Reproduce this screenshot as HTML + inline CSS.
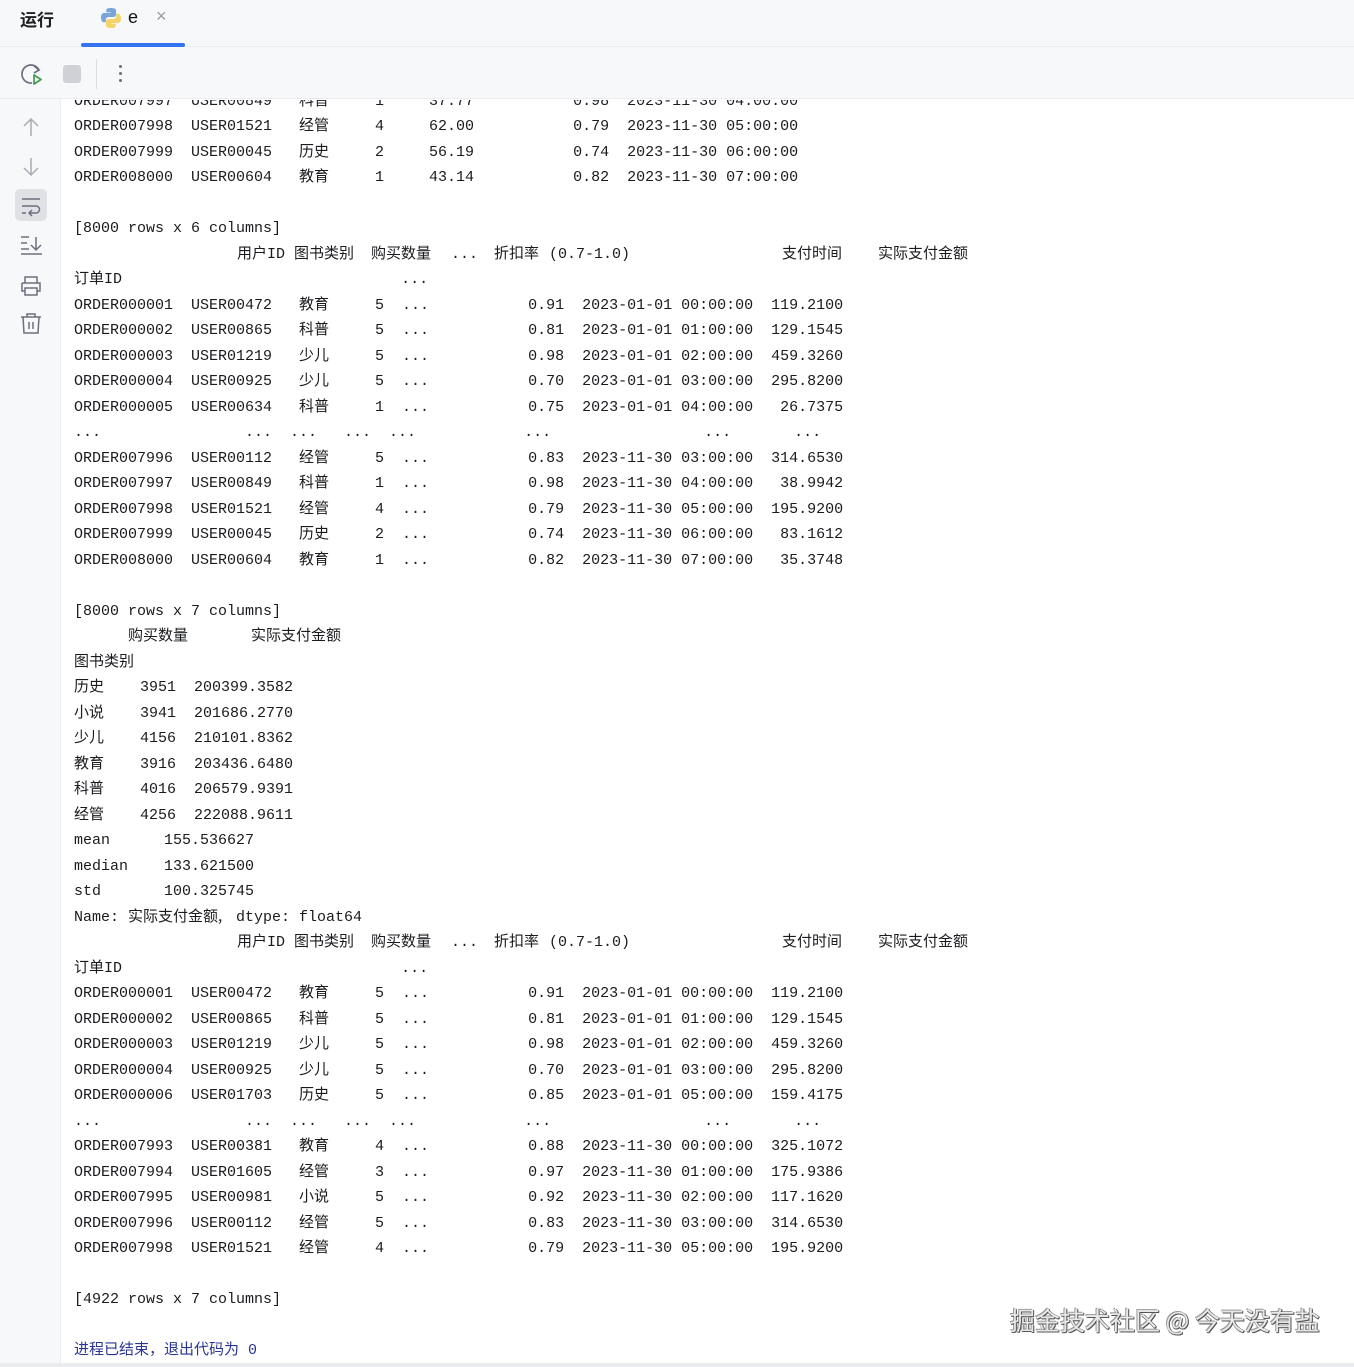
<!DOCTYPE html>
<html><head><meta charset="utf-8"><style>
*{margin:0;padding:0;box-sizing:border-box}
body{width:1354px;height:1367px;background:#fff;position:relative;overflow:hidden;font-family:"Liberation Sans","Noto Sans CJK SC",sans-serif;color:#1e1f22}
#hdr{position:absolute;left:0;top:0;width:1354px;height:47px;background:#f7f8fa;border-bottom:1px solid #ebecf0}
#tb{position:absolute;left:0;top:47px;width:1354px;height:52px;background:#f7f8fa;border-bottom:1px solid #ebecf0}
#side{position:absolute;left:0;top:99px;width:61px;height:1268px;background:#f7f8fa;border-right:1px solid #ebecf0}
#out{position:absolute;left:61px;top:100px;width:1293px;height:1263px;overflow:hidden}
#in{position:absolute;left:13px;top:-11.25px;font-family:"Liberation Mono","Noto Sans CJK SC",monospace;font-size:15px;line-height:25.5px;color:#1a1b1e;width:1200px}
.l{height:25.5px;position:relative;white-space:pre}
.k{display:inline-block;font-family:"Noto Sans CJK SC",sans-serif;font-size:15px;vertical-align:top;position:relative;top:-2px}
.w{width:76px}
.g{width:66px}
.a{position:absolute;top:0;font-family:"Liberation Mono","Noto Sans CJK SC",monospace}
.a.c{font-family:"Noto Sans CJK SC",sans-serif;font-size:15px;top:-2px}
#bot{position:absolute;left:0;top:1363px;width:1354px;height:4px;background:#ebecf0}
#wm{position:absolute;left:1010px;top:1302px;font-family:"Noto Sans CJK SC",sans-serif;font-size:25px;color:#e8e8e8;text-shadow:1px 1px 0 #555,-1px -1px 0 #999,1px 0 0 #666,0 1px 0 #666}
</style></head><body>
<div id="hdr">
<div style="position:absolute;left:20px;top:6px;font-size:17px;font-weight:bold;font-family:'Noto Sans CJK SC',sans-serif">运行</div>
<svg style="position:absolute;left:100px;top:7px" width="22" height="22" viewBox="0 0 22 22"><path d="M10.5 1C6 1 6.3 3 6.3 3v2.2h4.4v.7H4.4S1 5.6 1 10.5s3 4.8 3 4.8h1.8v-2.3s-.1-3 3-3h4.4s2.9 0 2.9-2.8V3.2S16.4 1 10.5 1z" fill="#7aa5d8"/><path d="M11.5 21c4.5 0 4.2-2 4.2-2v-2.2h-4.4v-.7h6.3S21 16.4 21 11.5s-3-4.8-3-4.8h-1.8V9s.1 3-3 3H8.8s-2.9 0-2.9 2.8v4S5.6 21 11.5 21z" fill="#f2d46b"/></svg>
<div style="position:absolute;left:128px;top:7px;font-size:18px;color:#111">e</div>
<div style="position:absolute;left:156px;top:6px;font-size:18px;color:#9a9ca1">×</div>
<div style="position:absolute;left:81px;top:43px;width:104px;height:4px;background:#3574f0;border-radius:2px"></div>
</div>
<div id="tb">
<svg style="position:absolute;left:20px;top:15px" width="26" height="26" viewBox="0 0 26 26"><path d="M19 8A9 9 0 1 0 12 21" fill="none" stroke="#6c707e" stroke-width="1.7"/><path d="M14 4l5 4-5 3" fill="none" stroke="#6c707e" stroke-width="1.7"/><path d="M14 13l7 4.5-7 4.5z" fill="none" stroke="#3f9b4b" stroke-width="1.7" stroke-linejoin="round"/></svg>
<div style="position:absolute;left:63px;top:18px;width:18px;height:18px;background:#cfd1d6;border-radius:3px"></div>
<div style="position:absolute;left:96px;top:12px;width:1px;height:30px;background:#dcdde1"></div>
<div style="position:absolute;left:119px;top:18px;width:3px;height:3px;background:#6c707e;border-radius:2px;box-shadow:0 7px 0 #6c707e,0 14px 0 #6c707e"></div>
</div>
<div id="side">
<svg style="position:absolute;left:0;top:0" width="61" height="250" viewBox="0 0 61 250" fill="none" stroke="#a8abb2" stroke-width="1.5">
<path d="M31 37V20M24 27l7-7 7 7"/>
<path d="M31 59v17M24 69l7 7 7-7"/>
<rect x="15" y="90" width="32" height="32" rx="5" fill="#dfe1e5" stroke="none"/>
<path d="M22 100h18M22 107h14a3.5 3.5 0 0 1 0 7h-6M32 111l-3 3 3 3M22 114h4" stroke="#6c707e"/>
<path d="M21 138h8M21 144h6M21 150h8M21 155h21M36 138v13M31 146l5 5 5-5" stroke="#6c707e"/>
<path d="M25 184v-6h12v6M22 184h18v8h-3M25 192h-3v-8M25 189h12v7H25z" stroke="#6c707e"/>
<path d="M21 218h20M27 218v-3h8v3M23 218l1 16h14l1-16M29 223v7M33 223v7" stroke="#6c707e"/>
</svg>
</div>
<div id="out"><div id="in"><div class="l">ORDER007997  USER00849   <span class="k w">科普</span>1     37.77           0.98  2023-11-30 04:00:00</div><div class="l">ORDER007998  USER01521   <span class="k w">经管</span>4     62.00           0.79  2023-11-30 05:00:00</div><div class="l">ORDER007999  USER00045   <span class="k w">历史</span>2     56.19           0.74  2023-11-30 06:00:00</div><div class="l">ORDER008000  USER00604   <span class="k w">教育</span>1     43.14           0.82  2023-11-30 07:00:00</div><div class="l"> </div><div class="l">[8000 rows x 6 columns]</div><div class="l"><span class="a c" style="left:163px">用户<span style="font-family:'Liberation Mono';font-size:15px">ID</span></span><span class="a c" style="left:220px">图书类别</span><span class="a c" style="left:297px">购买数量</span><span class="a" style="left:377px">...</span><span class="a c" style="left:420px">折扣率</span><span class="a" style="left:475px">(0.7-1.0)</span><span class="a c" style="left:708px">支付时间</span><span class="a c" style="left:804px">实际支付金额</span></div><div class="l"><span class="k">订单</span>ID                               ...</div><div class="l">ORDER000001  USER00472   <span class="k w">教育</span>5  ...           0.91  2023-01-01 00:00:00  119.2100</div><div class="l">ORDER000002  USER00865   <span class="k w">科普</span>5  ...           0.81  2023-01-01 01:00:00  129.1545</div><div class="l">ORDER000003  USER01219   <span class="k w">少儿</span>5  ...           0.98  2023-01-01 02:00:00  459.3260</div><div class="l">ORDER000004  USER00925   <span class="k w">少儿</span>5  ...           0.70  2023-01-01 03:00:00  295.8200</div><div class="l">ORDER000005  USER00634   <span class="k w">科普</span>1  ...           0.75  2023-01-01 04:00:00   26.7375</div><div class="l">...                ...  ...   ...  ...            ...                 ...       ...</div><div class="l">ORDER007996  USER00112   <span class="k w">经管</span>5  ...           0.83  2023-11-30 03:00:00  314.6530</div><div class="l">ORDER007997  USER00849   <span class="k w">科普</span>1  ...           0.98  2023-11-30 04:00:00   38.9942</div><div class="l">ORDER007998  USER01521   <span class="k w">经管</span>4  ...           0.79  2023-11-30 05:00:00  195.9200</div><div class="l">ORDER007999  USER00045   <span class="k w">历史</span>2  ...           0.74  2023-11-30 06:00:00   83.1612</div><div class="l">ORDER008000  USER00604   <span class="k w">教育</span>1  ...           0.82  2023-11-30 07:00:00   35.3748</div><div class="l"> </div><div class="l">[8000 rows x 7 columns]</div><div class="l"><span class="a c" style="left:54px">购买数量</span><span class="a c" style="left:177px">实际支付金额</span></div><div class="l"><span class="k">图书类别</span></div><div class="l"><span class="k g">历史</span>3951  200399.3582</div><div class="l"><span class="k g">小说</span>3941  201686.2770</div><div class="l"><span class="k g">少儿</span>4156  210101.8362</div><div class="l"><span class="k g">教育</span>3916  203436.6480</div><div class="l"><span class="k g">科普</span>4016  206579.9391</div><div class="l"><span class="k g">经管</span>4256  222088.9611</div><div class="l">mean      155.536627</div><div class="l">median    133.621500</div><div class="l">std       100.325745</div><div class="l">Name: <span class="k" style="width:108px">实际支付金额,</span>dtype: float64</div><div class="l"><span class="a c" style="left:163px">用户<span style="font-family:'Liberation Mono';font-size:15px">ID</span></span><span class="a c" style="left:220px">图书类别</span><span class="a c" style="left:297px">购买数量</span><span class="a" style="left:377px">...</span><span class="a c" style="left:420px">折扣率</span><span class="a" style="left:475px">(0.7-1.0)</span><span class="a c" style="left:708px">支付时间</span><span class="a c" style="left:804px">实际支付金额</span></div><div class="l"><span class="k">订单</span>ID                               ...</div><div class="l">ORDER000001  USER00472   <span class="k w">教育</span>5  ...           0.91  2023-01-01 00:00:00  119.2100</div><div class="l">ORDER000002  USER00865   <span class="k w">科普</span>5  ...           0.81  2023-01-01 01:00:00  129.1545</div><div class="l">ORDER000003  USER01219   <span class="k w">少儿</span>5  ...           0.98  2023-01-01 02:00:00  459.3260</div><div class="l">ORDER000004  USER00925   <span class="k w">少儿</span>5  ...           0.70  2023-01-01 03:00:00  295.8200</div><div class="l">ORDER000006  USER01703   <span class="k w">历史</span>5  ...           0.85  2023-01-01 05:00:00  159.4175</div><div class="l">...                ...  ...   ...  ...            ...                 ...       ...</div><div class="l">ORDER007993  USER00381   <span class="k w">教育</span>4  ...           0.88  2023-11-30 00:00:00  325.1072</div><div class="l">ORDER007994  USER01605   <span class="k w">经管</span>3  ...           0.97  2023-11-30 01:00:00  175.9386</div><div class="l">ORDER007995  USER00981   <span class="k w">小说</span>5  ...           0.92  2023-11-30 02:00:00  117.1620</div><div class="l">ORDER007996  USER00112   <span class="k w">经管</span>5  ...           0.83  2023-11-30 03:00:00  314.6530</div><div class="l">ORDER007998  USER01521   <span class="k w">经管</span>4  ...           0.79  2023-11-30 05:00:00  195.9200</div><div class="l"> </div><div class="l">[4922 rows x 7 columns]</div><div class="l"> </div><div class="l" style="color:#283593"><span class="k">进程已结束，退出代码为</span> 0</div></div></div>
<div id="bot"></div>
<div id="wm">掘金技术社区 @ 今天没有盐</div>
</body></html>
